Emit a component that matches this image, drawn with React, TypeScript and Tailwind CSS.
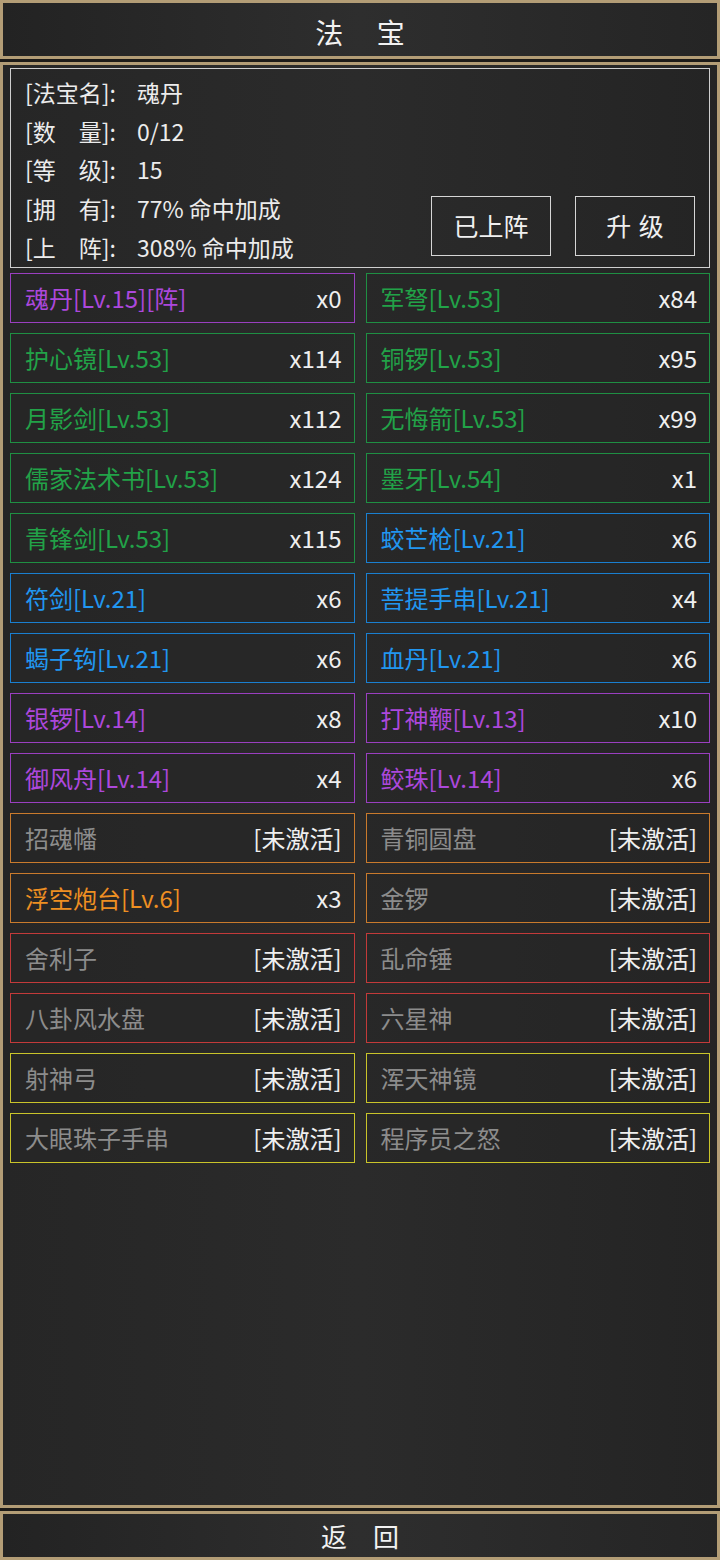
const FONT = { fontFamily: '"Noto Sans CJK SC", "Noto Sans", sans-serif' };

type Tone = "purple" | "green" | "blue" | "orange" | "red" | "yellow";

const borderCls: Record<Tone, string> = {
  purple: "border-[#9a3fc0]",
  green: "border-[#1f8f43]",
  blue: "border-[#1a7fd0]",
  orange: "border-[#c97a2c]",
  red: "border-[#c33a3a]",
  yellow: "border-[#c9c42a]",
};

const textCls: Record<Tone, string> = {
  purple: "text-[#ac48dc]",
  green: "text-[#22a248]",
  blue: "text-[#2196f0]",
  orange: "text-[#ee8f22]",
  red: "text-[#d04040]",
  yellow: "text-[#d8d030]",
};

type Item = { name: string; tone: Tone; count?: string; active: boolean };

const items: Item[] = [
  { name: "魂丹[Lv.15][阵]", tone: "purple", count: "x0", active: true },
  { name: "军弩[Lv.53]", tone: "green", count: "x84", active: true },
  { name: "护心镜[Lv.53]", tone: "green", count: "x114", active: true },
  { name: "铜锣[Lv.53]", tone: "green", count: "x95", active: true },
  { name: "月影剑[Lv.53]", tone: "green", count: "x112", active: true },
  { name: "无悔箭[Lv.53]", tone: "green", count: "x99", active: true },
  { name: "儒家法术书[Lv.53]", tone: "green", count: "x124", active: true },
  { name: "墨牙[Lv.54]", tone: "green", count: "x1", active: true },
  { name: "青锋剑[Lv.53]", tone: "green", count: "x115", active: true },
  { name: "蛟芒枪[Lv.21]", tone: "blue", count: "x6", active: true },
  { name: "符剑[Lv.21]", tone: "blue", count: "x6", active: true },
  { name: "菩提手串[Lv.21]", tone: "blue", count: "x4", active: true },
  { name: "蝎子钩[Lv.21]", tone: "blue", count: "x6", active: true },
  { name: "血丹[Lv.21]", tone: "blue", count: "x6", active: true },
  { name: "银锣[Lv.14]", tone: "purple", count: "x8", active: true },
  { name: "打神鞭[Lv.13]", tone: "purple", count: "x10", active: true },
  { name: "御风舟[Lv.14]", tone: "purple", count: "x4", active: true },
  { name: "鲛珠[Lv.14]", tone: "purple", count: "x6", active: true },
  { name: "招魂幡", tone: "orange", active: false },
  { name: "青铜圆盘", tone: "orange", active: false },
  { name: "浮空炮台[Lv.6]", tone: "orange", count: "x3", active: true },
  { name: "金锣", tone: "orange", active: false },
  { name: "舍利子", tone: "red", active: false },
  { name: "乱命锤", tone: "red", active: false },
  { name: "八卦风水盘", tone: "red", active: false },
  { name: "六星神", tone: "red", active: false },
  { name: "射神弓", tone: "yellow", active: false },
  { name: "浑天神镜", tone: "yellow", active: false },
  { name: "大眼珠子手串", tone: "yellow", active: false },
  { name: "程序员之怒", tone: "yellow", active: false },
];

const info = [
  ["[法宝名]:", "魂丹"],
  ["[数　量]:", "0/12"],
  ["[等　级]:", "15"],
  ["[拥　有]:", "77% 命中加成"],
  ["[上　阵]:", "308% 命中加成"],
];

function Bar({ label, className, textCls }: { label: string; className: string; textCls: string }) {
  return (
    <div
      className={`flex items-center justify-center border-[3px] border-[#b39d76] bg-gradient-to-r from-[#232323] via-[#2e2e2e] to-[#252525] ${className}`}
    >
      <span className={`leading-none text-[#f2f2f2] ${textCls}`}>{label}</span>
    </div>
  );
}

export default function App() {
  return (
    <div className="flex h-[1560px] w-[720px] flex-col gap-[3px] bg-[#1d1b18]" style={FONT}>
      <Bar label="法宝" className="h-[59px] pt-[4px]" textCls="text-[28px] tracking-[1.2em] pl-[1.2em]" />

      <div className="flex flex-1 flex-col gap-[5px] border-[3px] border-[#b39d76] bg-gradient-to-r from-[#262626] via-[#2b2b2b] to-[#242424] px-[7px] pt-[3px]">
        <div className="relative h-[200px] border border-[#cfcfcf] px-[14px] pt-[4px]">
          {info.map(([k, v]) => (
            <div key={k} className="flex h-[38.8px] items-center text-[23px] leading-none text-[#ececec]">
              <span className="w-[112px] whitespace-pre">{k}</span>
              <span>{v}</span>
            </div>
          ))}
          <div className="absolute bottom-[11px] right-[14px] flex gap-[24px]">
            <button className="flex h-[60px] w-[120px] items-center justify-center border border-[#d6d6d6] text-[25px] text-[#f0f0f0]">
              已上阵
            </button>
            <button className="flex h-[60px] w-[120px] items-center justify-center border border-[#d6d6d6] text-[25px] tracking-[0.3em] pl-[0.3em] text-[#f0f0f0]">
              升级
            </button>
          </div>
        </div>

        <div className="grid grid-cols-2 gap-x-[11px] gap-y-[10px]">
          {items.map((it) => (
            <div
              key={it.name}
              className={`flex h-[50px] items-center justify-between border bg-[#262626]/60 pl-[14px] pr-[12px] text-[24px] leading-none ${borderCls[it.tone]}`}
            >
              <span className={it.active ? textCls[it.tone] : "text-[#8c8c8c]"}>{it.name}</span>
              <span className="text-[#efefef]">{it.active ? it.count : "[未激活]"}</span>
            </div>
          ))}
        </div>
      </div>

      <Bar label="返回" className="h-[49px]" textCls="text-[26px] tracking-[1em] pl-[1em]" />
    </div>
  );
}
